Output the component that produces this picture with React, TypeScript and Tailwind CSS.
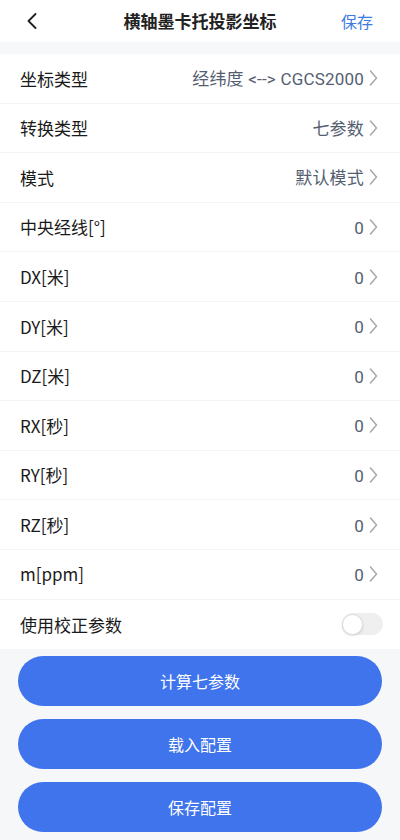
type Row = { label: string; value?: string };

const rows: Row[] = [
  { label: '坐标类型', value: '经纬度 <--> CGCS2000' },
  { label: '转换类型', value: '七参数' },
  { label: '模式', value: '默认模式' },
  { label: '中央经线[°]', value: '0' },
  { label: 'DX[米]', value: '0' },
  { label: 'DY[米]', value: '0' },
  { label: 'DZ[米]', value: '0' },
  { label: 'RX[秒]', value: '0' },
  { label: 'RY[秒]', value: '0' },
  { label: 'RZ[秒]', value: '0' },
  { label: 'm[ppm]', value: '0' },
];

function Chevron() {
  return (
    <svg width="9" height="16" viewBox="0 0 9 16" fill="none" className="shrink-0">
      <polyline points="1.5,1 7.5,8 1.5,15" stroke="#a8a8a8" strokeWidth="1.5" strokeLinecap="round" strokeLinejoin="round" />
    </svg>
  );
}

export default function App() {
  return (
    <div
      className="flex h-[840px] w-[400px] flex-col bg-[#f6f7f9] text-[#1a1a1a]"
      style={{ fontFamily: '"Noto Sans CJK SC", "Noto Sans", sans-serif' }}
    >
      <header className="relative flex h-[42px] items-center justify-between bg-white pl-[27px] pr-[27px]">
        <svg width="10" height="16" viewBox="0 0 10 16" fill="none">
          <polyline points="8.5,1 1.5,8 8.5,15" stroke="#1f1f1f" strokeWidth="1.8" strokeLinecap="round" strokeLinejoin="round" />
        </svg>
        <h1 className="absolute left-1/2 -translate-x-1/2 text-[17px] font-bold text-[#222]">横轴墨卡托投影坐标</h1>
        <span className="text-[16px] text-[#3d7be0]">保存</span>
      </header>

      <div className="mt-[12px] bg-white">
        {rows.map((r) => (
          <div
            key={r.label}
            className="flex h-[49.6px] items-center justify-between border-b border-[#f4f4f4] pl-5 pr-[22px]"
          >
            <span className="text-[17px]">{r.label}</span>
            <span className="flex items-center gap-[5px] font-['Roboto','Noto_Sans_CJK_SC',sans-serif] text-[17px] leading-[24px] tracking-[0.2px] text-[#545e70]">
              <span className="pt-[2px]">{r.value}</span>
              <Chevron />
            </span>
          </div>
        ))}
        <div className="flex h-[49.6px] items-center justify-between pl-5 pr-[17px]">
          <span className="text-[17px]">使用校正参数</span>
          <div className="flex h-[22px] w-[41px] items-center rounded-full bg-[#efefef]">
            <div className="h-[21px] w-[21px] rounded-full border border-[#dcdcdc] bg-white shadow-sm" />
          </div>
        </div>
      </div>

      <div className="flex flex-col gap-[13px] px-[18px] pt-[7px]">
        {['计算七参数', '载入配置', '保存配置'].map((t) => (
          <button
            key={t}
            className="h-[50px] rounded-full bg-[#3f74ec] text-[16px] text-white"
          >
            {t}
          </button>
        ))}
      </div>
    </div>
  );
}
